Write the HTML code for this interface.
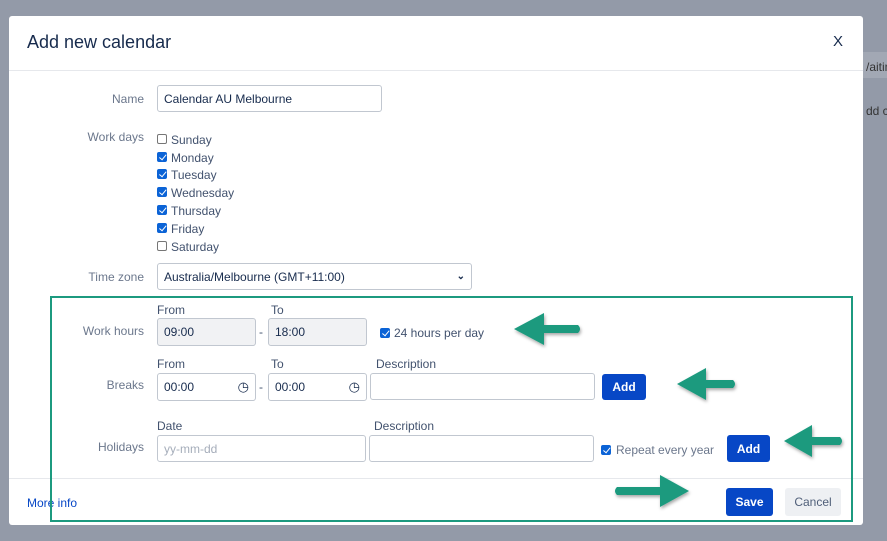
<!DOCTYPE html>
<html><head><style>
body{margin:0;width:887px;height:541px;background:#939aa8;position:relative;overflow:hidden;font-family:"Liberation Sans",sans-serif;color:#172b4d}
.a{position:absolute;white-space:nowrap}
.modal{left:9px;top:16px;width:854px;height:509px;background:#fff;border-radius:3px}
.lbl{position:absolute;font-size:12px;color:#6b778c;text-align:right;width:135px;left:9px}
.t{position:absolute;font-size:12px;color:#42526e;white-space:nowrap}
.in{position:absolute;border:1px solid #c1c7d0;border-radius:3px;background:#fff;box-sizing:border-box;font-size:12px;color:#172b4d;padding:0 6px;display:flex;align-items:center}
.cb{position:absolute;width:10px;height:10px;border:1px solid #767676;border-radius:2px;box-sizing:border-box;background:#fff}
.cb.on{background:#0b63d6;border-color:#0b63d6}
.cb.on:after{content:"";position:absolute;left:2.5px;top:0px;width:3px;height:5.5px;border:solid #fff;border-width:0 1.5px 1.5px 0;transform:rotate(40deg)}
.btn{position:absolute;background:#0747c6;color:#fff;font-weight:bold;font-size:12px;border-radius:3px;display:flex;align-items:center;justify-content:center}
</style></head><body>
<div class="a" style="left:863px;top:52px;width:24px;height:26px;background:#a2a8b4"></div>
<div class="a" style="left:866px;top:60px;font-size:12px;color:#333">/aitin</div>
<div class="a" style="left:866px;top:104px;font-size:12px;color:#333">dd c</div>
<div class="a modal"></div>
<div class="a" style="left:27px;top:32px;font-size:18px;color:#172b4d">Add new calendar</div>
<div class="a" style="left:833px;top:33px;font-size:15px;color:#172b4d">X</div>
<div class="a" style="left:9px;top:70px;width:854px;height:1px;background:#e6e8ec"></div>

<div class="lbl" style="top:92px">Name</div>
<div class="in" style="left:157px;top:85px;width:225px;height:27px">Calendar AU Melbourne</div>
<div class="lbl" style="top:130px">Work days</div>
<div class="cb" style="left:157px;top:134px"></div><div class="t" style="left:171px;top:133px">Sunday</div>
<div class="cb on" style="left:157px;top:152px"></div><div class="t" style="left:171px;top:151px">Monday</div>
<div class="cb on" style="left:157px;top:169px"></div><div class="t" style="left:171px;top:168px">Tuesday</div>
<div class="cb on" style="left:157px;top:187px"></div><div class="t" style="left:171px;top:186px">Wednesday</div>
<div class="cb on" style="left:157px;top:205px"></div><div class="t" style="left:171px;top:204px">Thursday</div>
<div class="cb on" style="left:157px;top:223px"></div><div class="t" style="left:171px;top:222px">Friday</div>
<div class="cb" style="left:157px;top:241px"></div><div class="t" style="left:171px;top:240px">Saturday</div>

<div class="lbl" style="top:270px">Time zone</div>
<div class="in" style="left:157px;top:263px;width:315px;height:27px">Australia/Melbourne (GMT+11:00)<span style="position:absolute;right:6px;font-size:10px;font-weight:bold">&#8964;</span></div>

<div class="t" style="left:157px;top:303px">From</div><div class="t" style="left:271px;top:303px">To</div>
<div class="lbl" style="top:324px">Work hours</div>
<div class="in" style="left:157px;top:318px;width:99px;height:28px;background:#f1f2f4">09:00</div>
<div class="t" style="left:259px;top:325px">-</div>
<div class="in" style="left:268px;top:318px;width:99px;height:28px;background:#f1f2f4">18:00</div>
<div class="cb on" style="left:380px;top:328px"></div><div class="t" style="left:394px;top:326px">24 hours per day</div>

<div class="t" style="left:157px;top:357px">From</div><div class="t" style="left:271px;top:357px">To</div><div class="t" style="left:376px;top:357px">Description</div>
<div class="lbl" style="top:378px">Breaks</div>
<div class="in" style="left:157px;top:373px;width:99px;height:28px">00:00<span style="position:absolute;right:6px;font-size:13px">&#9719;</span></div>
<div class="t" style="left:259px;top:380px">-</div>
<div class="in" style="left:268px;top:373px;width:99px;height:28px">00:00<span style="position:absolute;right:6px;font-size:13px">&#9719;</span></div>
<div class="in" style="left:370px;top:373px;width:225px;height:27px"></div>
<div class="btn" style="left:602px;top:374px;width:44px;height:26px">Add</div>

<div class="t" style="left:157px;top:419px">Date</div><div class="t" style="left:374px;top:419px">Description</div>
<div class="lbl" style="top:440px">Holidays</div>
<div class="in" style="left:157px;top:435px;width:209px;height:27px;color:#a5adba">yy-mm-dd</div>
<div class="in" style="left:369px;top:435px;width:225px;height:27px"></div>
<div class="cb on" style="left:601px;top:445px"></div><div class="t" style="left:616px;top:443px;color:#6b778c">Repeat every year</div>
<div class="btn" style="left:727px;top:435px;width:43px;height:27px">Add</div>

<div class="a" style="left:9px;top:478px;width:854px;height:1px;background:#e6e8ec"></div>
<div class="a" style="left:27px;top:496px;font-size:12px;color:#0747c6">More info</div>
<div class="btn" style="left:726px;top:488px;width:47px;height:28px">Save</div>
<div class="a" style="left:785px;top:488px;width:56px;height:28px;background:#eef0f3;border-radius:3px;font-size:12px;color:#505f79;display:flex;align-items:center;justify-content:center">Cancel</div>

<div class="a" style="left:50px;top:296px;width:803px;height:226px;border:2px solid #1c9a7f;box-sizing:border-box"></div>

<svg class="a" style="left:0;top:0" width="887" height="541">
<defs><filter id="s"><feDropShadow dx="1" dy="2" stdDeviation="1.5" flood-color="#000" flood-opacity="0.35"/></filter></defs>
<g fill="#1a9a7e" filter="url(#s)">
<path d="M514 329 L544 313 L544 325 L578 325 Q582 329 578 333 L544 333 L544 345 Z"/>
<path d="M677 384 L706 368 L706 380 L733 380 Q737 384 733 388 L706 388 L706 400 Z"/>
<path d="M784 441 L812 425 L812 437 L840 437 Q844 441 840 445 L812 445 L812 457 Z"/>
<path d="M689 491 L660 475 L660 487 L617 487 Q613 491 617 495 L660 495 L660 507 Z"/>
</g></svg>
</body></html>
